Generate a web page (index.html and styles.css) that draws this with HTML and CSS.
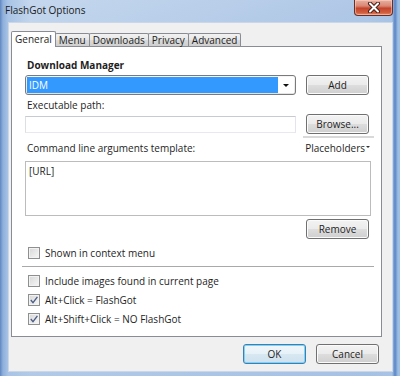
FILE: index.html
```html
<!DOCTYPE html>
<html lang="en">
<head>
    <meta charset="UTF-8">
    <title>FlashGot Options</title>
    <link rel="stylesheet" href="styles.css">
</head>
<body>
    <div class="window">
        <div class="titlebar">
            <span class="title">FlashGot Options</span>
            <button class="close-btn" aria-label="Close">
                <svg width="14" height="11" viewBox="0 0 14 11">
                    <path d="M3 1.5 L11 9.5 M11 1.5 L3 9.5" stroke="#4a2018" stroke-width="4" stroke-linecap="round"/>
                    <path d="M3 1.5 L11 9.5 M11 1.5 L3 9.5" stroke="#ffffff" stroke-width="2" stroke-linecap="round"/>
                </svg>
            </button>
        </div>
        <div class="client">
            <div class="tabs">
                <span class="tab tab-active">General</span>
                <span class="tab">Menu</span>
                <span class="tab">Downloads</span>
                <span class="tab">Privacy</span>
                <span class="tab">Advanced</span>
            </div>
            <div class="tab-panel">
                <div class="group-label">Download Manager</div>
                <div class="row">
                    <div class="combo">
                        <span class="combo-value">IDM</span>
                        <span class="combo-arrow"></span>
                    </div>
                    <button class="btn">Add</button>
                </div>

                <div class="field-label">Executable path:</div>
                <div class="row">
                    <input type="text" class="text-input">
                    <button class="btn">Browse...</button>
                </div>
                <div class="hr-short"></div>

                <div class="label-row">
                    <span class="field-label">Command line arguments template:</span>
                    <span class="placeholders">Placeholders<span class="mini-arrow"></span></span>
                </div>
                <textarea class="args">[URL]</textarea>
                <div class="row row-end">
                    <button class="btn">Remove</button>
                </div>

                <label class="check">
                    <span class="box"></span>
                    Shown in context menu
                </label>

                <div class="separator"></div>

                <label class="check check-first">
                    <span class="box"></span>
                    Include images found in current page
                </label>
                <label class="check">
                    <span class="box checked">
                        <svg width="10" height="10" viewBox="0 0 10 10"><path d="M1.8 5 L4 7.6 L8.4 1.8" fill="none" stroke="#4a5c86" stroke-width="1.3"/></svg>
                    </span>
                    Alt+Click = FlashGot
                </label>
                <label class="check">
                    <span class="box checked">
                        <svg width="10" height="10" viewBox="0 0 10 10"><path d="M1.8 5 L4 7.6 L8.4 1.8" fill="none" stroke="#4a5c86" stroke-width="1.3"/></svg>
                    </span>
                    Alt+Shift+Click = NO FlashGot
                </label>
            </div>
            <div class="footer">
                <button class="btn btn-default">OK</button>
                <button class="btn">Cancel</button>
            </div>
        </div>
    </div>
</body>
</html>
```

FILE: styles.css
```css
/* Base */
* {
    margin: 0;
    padding: 0;
    box-sizing: border-box;
}

body {
    font-family: "Open Sans", "Noto Sans", sans-serif;
    font-size: 10px;
    color: #1e1e1e;
    width: 400px;
    height: 376px;
    overflow: hidden;
}

button, input, textarea {
    font-family: inherit;
    font-size: 10px;
    color: #1e1e1e;
}

/* Window frame */
.window {
    height: 376px;
    display: flex;
    flex-direction: column;
    background:
        linear-gradient(90deg, #5f87c2 0, #8fb0db 3px, #a8c3e5 8px, transparent 30px, transparent 370px, #a8c3e5 392px, #5a86c6 395px, #9ebde3 398px),
        linear-gradient(160deg, #c6d8ee 0%, #a9c3e4 35%, #b9cfea 60%, #a4c0e4 100%);
}

.titlebar {
    height: 22px;
    display: flex;
    justify-content: space-between;
    align-items: flex-start;
    padding: 0 7px 0 5px;
}

.title {
    line-height: 21px;
    font-size: 10px;
    color: #1a1a1a;
}

.close-btn {
    width: 39px;
    height: 16px;
    border: 1px solid #6a2f24;
    border-top: none;
    border-radius: 0 0 4px 4px;
    background: linear-gradient(#eab0a0 0%, #d98773 40%, #c4442b 55%, #d1603f 85%, #e38a6c 100%);
    box-shadow: inset 0 0 0 1px rgba(255, 220, 210, 0.5);
    display: flex;
    align-items: center;
    justify-content: center;
}

/* Client area */
.client {
    flex: 1;
    margin: 0 7px 4px 8px;
    background-color: #f0f0f0;
    border: 1px solid #c9d7e8;
    padding: 8px 10px 0 2px;
    display: flex;
    flex-direction: column;
}

/* Tabs */
.tabs {
    display: flex;
    align-items: flex-end;
    height: 16px;
    margin-bottom: -1px;
    position: relative;
    z-index: 1;
}

.tab {
    height: 13px;
    margin-bottom: 1px;
    margin-left: -1px;
    padding: 0 3px;
    line-height: 12px;
    border: 1px solid #898c95;
    border-bottom: none;
    border-radius: 2px 2px 0 0;
    background: linear-gradient(#f2f2f2, #e6e6e6 50%, #dadada 51%, #cfcfcf);
}

.tab-active {
    height: 16px;
    margin-bottom: 0;
    margin-left: 0;
    padding: 0 3px;
    line-height: 14px;
    background: #ffffff;
    position: relative;
    z-index: 2;
}

.tab-panel {
    height: 291px;
    background-color: #ffffff;
    border: 1px solid #898c95;
    padding: 0 10px 0 13px;
    display: flex;
    flex-direction: column;
}

/* Form */
.group-label {
    margin-top: 11px;
    padding-left: 2px;
    line-height: 15px;
    font-weight: 700;
}

.field-label {
    margin-top: 3px;
    padding-left: 2px;
    line-height: 15px;
}

.row {
    display: flex;
    align-items: center;
    justify-content: space-between;
    height: 20px;
    margin-top: 2px;
}

.field-label + .row {
    margin-top: 1px;
}

.row-end {
    justify-content: flex-end;
    margin-top: 3px;
}

.combo {
    width: 271px;
    height: 20px;
    border: 1px solid #7a7a7a;
    border-radius: 3px;
    padding: 1px;
    display: flex;
    background: linear-gradient(#f6f6f6, #e3e3e3);
}

.combo-value {
    flex: 1;
    background-color: #3399ff;
    color: #ffffff;
    line-height: 16px;
    padding-left: 2px;
}

.combo-arrow {
    width: 16px;
    position: relative;
    background-color: #ffffff;
}

.combo-arrow::after {
    content: "";
    position: absolute;
    left: 5px;
    top: 7px;
    border-left: 3px solid transparent;
    border-right: 3px solid transparent;
    border-top: 3px solid #111;
}

.text-input {
    width: 271px;
    height: 17px;
    border: 1px solid;
    border-color: #c7cad0 #e3e5ea #e8e9ee #dcdfe4;
    background: #ffffff;
}

.btn {
    width: 63px;
    height: 20px;
    margin-right: 2px;
    border: 1px solid #707070;
    border-radius: 3px;
    background: linear-gradient(#f3f3f3 0%, #ebebeb 48%, #dddddd 52%, #cfcfcf 100%);
    box-shadow: inset 0 0 0 1px #fbfbfb;
    text-align: center;
    cursor: pointer;
}

.btn-default {
    border-color: #3c7fb1;
    box-shadow: inset 0 0 0 1px #7ed2f7;
    background: linear-gradient(#f0f7fb 0%, #e6f1f8 48%, #d8e8f2 52%, #cde1ee 100%);
}

.hr-short {
    width: 71px;
    height: 2px;
    margin: 2px -3px 0 auto;
    background-color: #d9d9d9;
}

.label-row {
    display: flex;
    justify-content: space-between;
    align-items: flex-start;
    margin-top: 3px;
    line-height: 15px;
}

.label-row .field-label {
    margin-top: 0;
}

.placeholders {
    margin-right: 1px;
    display: flex;
    align-items: flex-start;
}

.mini-arrow {
    margin-top: 5px;
    margin-left: 1px;
    border-left: 2px solid transparent;
    border-right: 2px solid transparent;
    border-top: 2px solid #333;
}

.args {
    margin-top: 5px;
    width: 100%;
    height: 55px;
    border: 1px solid #bcbcbc;
    padding: 2px 3px;
    line-height: 14px;
    resize: none;
    background: #ffffff;
}

/* Checkboxes */
.check {
    display: flex;
    align-items: center;
    height: 15px;
    margin-top: 4px;
    padding-left: 3px;
}

.row-end + .check {
    margin-top: 6px;
}

.check-first {
    margin-top: 6px;
}

.box {
    width: 12px;
    height: 12px;
    margin-right: 5px;
    border: 1px solid #8e8f8f;
    background: linear-gradient(135deg, #d7d7d7, #f7f7f7);
    box-shadow: inset 0 0 0 1px #f2f2f2;
    display: flex;
    align-items: center;
    justify-content: center;
}

.separator {
    height: 1px;
    margin: 6px -3px 0 -3px;
    background-color: #a9a9a9;
}

/* Footer */
.footer {
    display: flex;
    justify-content: flex-end;
    gap: 10px;
    margin-top: 7px;
    padding-right: 3px;
}

.footer .btn {
    margin-right: 0;
}
```
